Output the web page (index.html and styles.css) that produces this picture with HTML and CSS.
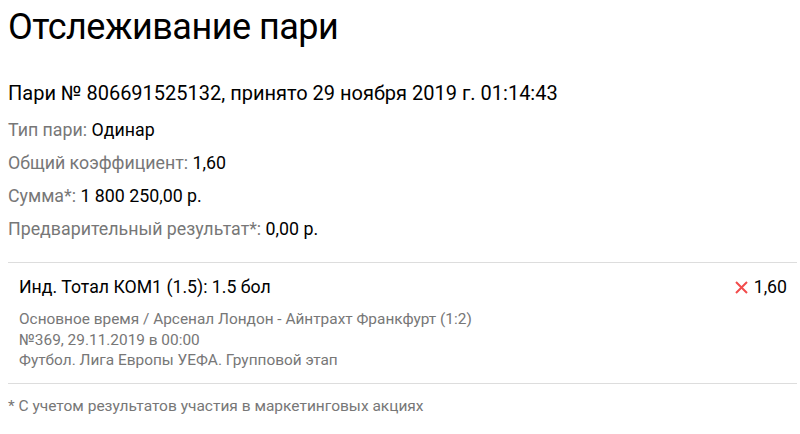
FILE: index.html
```html
<!DOCTYPE html>
<html lang="ru">
<head>
<meta charset="utf-8">
<title>Отслеживание пари</title>
<link rel="stylesheet" href="styles.css">
</head>
<body>
<div class="page">
  <h1 class="title">Отслеживание пари</h1>
  <h2 class="bet-head">Пари № 806691525132, принято 29 ноября 2019 г. 01:14:43</h2>
  <div class="info">
    <div class="info-row"><span class="label">Тип пари:</span> <span class="value">Одинар</span></div>
    <div class="info-row"><span class="label">Общий коэффициент:</span> <span class="value">1,60</span></div>
    <div class="info-row"><span class="label">Сумма*:</span> <span class="value">1 800 250,00 р.</span></div>
    <div class="info-row"><span class="label">Предварительный результат*:</span> <span class="value">0,00 р.</span></div>
  </div>
  <div class="event">
    <div class="event-top">
      <div class="event-name">Инд. Тотал КОМ1 (1.5): 1.5 бол</div>
      <div class="event-odds"><svg class="cross" width="13" height="13" viewBox="0 0 13 13"><path d="M1 1L12 12M12 1L1 12" stroke="#f24c4c" stroke-width="2" fill="none"/></svg><span>1,60</span></div>
    </div>
    <div class="event-details">
      <div>Основное время / Арсенал Лондон - Айнтрахт Франкфурт (1:2)</div>
      <div>№369, 29.11.2019 в 00:00</div>
      <div>Футбол. Лига Европы УЕФА. Групповой этап</div>
    </div>
  </div>
  <div class="note">* С учетом результатов участия в маркетинговых акциях</div>
</div>
</body>
</html>
```

FILE: styles.css
```css
html, body {
  margin: 0;
  padding: 0;
  background: #fff;
}
body {
  font-family: Roboto, "Liberation Sans", sans-serif;
  color: #000;
}
.page {
  padding: 0 3px 0 8px;
}
.title {
  margin: 0;
  padding-top: 6px;
  font-size: 36px;
  font-weight: 400;
  line-height: 42px;
  letter-spacing: -0.5px;
}
.bet-head {
  margin: 31px 0 0;
  font-size: 20px;
  font-weight: 400;
  line-height: 28px;
}
.info {
  margin-top: 6px;
}
.info-row {
  font-size: 17.8px;
  line-height: 33px;
}
.label {
  color: #777;
}
.event {
  margin-top: 17px;
  border-top: 1px solid #ddd;
  border-bottom: 1px solid #ddd;
  padding: 11px 10px 12px 11px;
}
.event-top {
  display: flex;
  justify-content: space-between;
  font-size: 17.7px;
  line-height: 26px;
}
.event-odds {
  display: flex;
  align-items: center;
  gap: 6px;
}
.cross {
  display: block;
}
.event-details {
  margin-top: 9px;
  font-size: 15.4px;
  line-height: 20.5px;
  color: #777;
}
.note {
  margin-top: 10px;
  font-size: 15.5px;
  line-height: 24px;
  color: #777;
}
```
